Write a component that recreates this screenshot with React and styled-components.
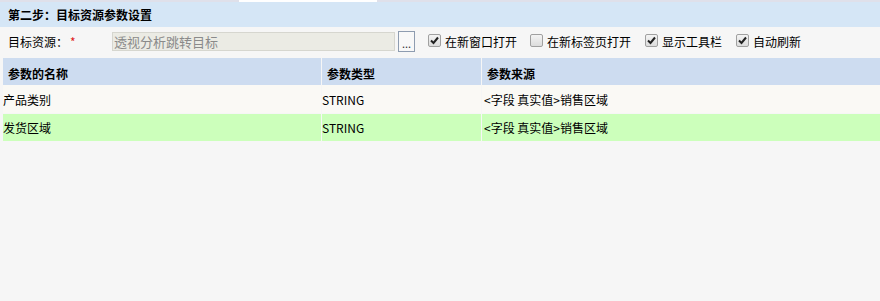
import React from "react";
import styled, { createGlobalStyle } from "styled-components";

const Global = createGlobalStyle`
  html, body { margin: 0; padding: 0; background: #f6f6f6; }
  body { font-family: "Noto Sans CJK SC", "Noto Sans", sans-serif; font-size: 12px; color: #000; }
`;

const Page = styled.div`
  width: 880px;
  height: 301px;
  background: #f6f6f6;
  display: flex;
  flex-direction: column;
  overflow: hidden;
`;

const TopStrip = styled.div`
  height: 2px;
  background: #dfe0ea;
  display: flex;
`;
const TabGap = styled.div`
  margin-left: 239px;
  width: 138px;
  background: #ffffff;
`;

const TitleBar = styled.div`
  height: 25px;
  background: #d5e6f6;
  display: flex;
  align-items: center;
  padding-left: 8px;
  font-weight: bold;
  font-size: 12px;
`;

const FormRow = styled.div`
  height: 29px;
  display: flex;
  align-items: center;
  padding-left: 8px;
  font-size: 12px;
`;

const Label = styled.div`
  width: 104px;
  display: flex;
  align-items: center;
`;
const Star = styled.span`
  color: #e02020;
  margin-left: 2px;
`;

const Input = styled.div`
  width: 280px;
  height: 17px;
  background: #ebebe4;
  border: 1px solid #d6d6cf;
  color: #8a8a8a;
  font-size: 13px;
  line-height: 17px;
  padding-left: 1px;
`;

const DotsButton = styled.div`
  width: 15px;
  height: 19px;
  margin-left: 3px;
  border: 1px solid #8e9cb0;
  background: #f8f8f8;
  font-size: 11px;
  line-height: 22px;
  text-align: center;
  color: #333;
`;

const Checks = styled.div`
  display: flex;
  align-items: center;
  margin-left: 13px;
`;

const CheckItem = styled.label`
  display: flex;
  align-items: center;
  font-size: 12px;
  margin-right: ${(p) => p.$gap}px;
`;

const Box = styled.span`
  width: 11px;
  height: 11px;
  border: 1px solid #a0a0a0;
  border-radius: 2px;
  background: linear-gradient(#f4f4f4, #dcdcdc);
  display: inline-flex;
  align-items: center;
  justify-content: center;
  margin-right: 4px;
  margin-top: -3px;
`;

const Check = ({ on }) => (
  <Box>
    {on && (
      <svg width="9" height="9" viewBox="0 0 9 9">
        <path d="M1 4.5 L3.5 7 L8 1.5" stroke="#222" strokeWidth="2" fill="none" />
      </svg>
    )}
  </Box>
);

const Table = styled.div`
  margin-top: 2px;
  margin-left: 3px;
  display: grid;
  grid-template-columns: 318px 159px 399px;
  column-gap: 1px;
`;

const HeadCell = styled.div`
  height: 27px;
  background: #cddcf0;
  font-weight: bold;
  display: flex;
  align-items: flex-end;
  padding-left: ${(p) => p.$pad}px;
  padding-bottom: 3px;
  box-sizing: border-box;
`;

const Cell = styled.div`
  height: ${(p) => p.$h}px;
  background: ${(p) => p.$bg};
  display: flex;
  align-items: center;
  padding-left: ${(p) => p.$pad}px;
  margin-top: ${(p) => p.$mt || 0}px;
  box-sizing: border-box;
`;

const rows = [
  { name: "产品类别", type: "STRING", src: "<字段 真实值>销售区域", bg: "#faf9f5", h: 28, mt: 0 },
  { name: "发货区域", type: "STRING", src: "<字段 真实值>销售区域", bg: "#ccffbb", h: 27, mt: 1 },
];

export default function App() {
  return (
    <Page>
      <Global />
      <TopStrip>
        <TabGap />
      </TopStrip>
      <TitleBar>第二步：目标资源参数设置</TitleBar>
      <FormRow>
        <Label>
          目标资源：<Star>*</Star>
        </Label>
        <Input>透视分析跳转目标</Input>
        <DotsButton>...</DotsButton>
        <Checks>
          <CheckItem $gap={13}>
            <Check on />在新窗口打开
          </CheckItem>
          <CheckItem $gap={14}>
            <Check />在新标签页打开
          </CheckItem>
          <CheckItem $gap={14}>
            <Check on />显示工具栏
          </CheckItem>
          <CheckItem $gap={0}>
            <Check on />自动刷新
          </CheckItem>
        </Checks>
      </FormRow>
      <Table>
        <HeadCell $pad={5}>参数的名称</HeadCell>
        <HeadCell $pad={5}>参数类型</HeadCell>
        <HeadCell $pad={5}>参数来源</HeadCell>
        {rows.map((r, i) => (
          <React.Fragment key={i}>
            <Cell $bg={r.bg} $h={r.h} $mt={r.mt} $pad={0}>{r.name}</Cell>
            <Cell $bg={r.bg} $h={r.h} $mt={r.mt} $pad={0}>{r.type}</Cell>
            <Cell $bg={r.bg} $h={r.h} $mt={r.mt} $pad={2}>{r.src}</Cell>
          </React.Fragment>
        ))}
      </Table>
    </Page>
  );
}
